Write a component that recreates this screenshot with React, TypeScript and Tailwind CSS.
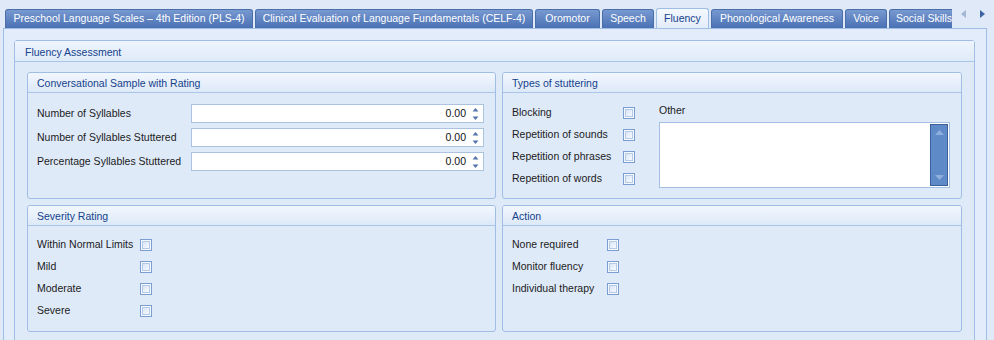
import React from "react";

const tabs = [
  { label: "Preschool Language Scales – 4th Edition (PLS-4)", w: "w-[248px]" },
  { label: "Clinical Evaluation of Language Fundamentals (CELF-4)", w: "w-[278px]" },
  { label: "Oromotor", w: "w-[65px]" },
  { label: "Speech", w: "w-[52px]" },
  { label: "Fluency", w: "w-[53px]", active: true },
  { label: "Phonological Awareness", w: "w-[132px]" },
  { label: "Voice", w: "w-[42px]" },
  { label: "Social Skills", w: "w-[70px]" },
];

function Checkbox() {
  return (
    <span className="block w-[12px] h-[12px] border border-[#7b9ed2] bg-[#f5f8fd] p-[1px]">
      <span className="block w-full h-full border border-[#b5cae8] bg-gradient-to-br from-[#d9e5f5] to-[#f7fafe]" />
    </span>
  );
}

function Spin() {
  return (
    <svg width="7" height="14" viewBox="0 0 7 14" className="mr-[4px]">
      <path d="M3.5 1 L6.5 4.5 L0.5 4.5 Z" fill="#5476ad" />
      <path d="M3.5 13 L6.5 9.5 L0.5 9.5 Z" fill="#5476ad" />
    </svg>
  );
}

function Section({ title, children }: { title: string; children: React.ReactNode }) {
  return (
    <div className="h-[127px] border border-[#9fbde5] rounded-[3px] bg-[#dfeaf9] overflow-hidden">
      <div className="h-[20px] border-b border-[#a9c5e9] bg-gradient-to-b from-[#f2f7fe] to-[#dde9f8] pl-[9px] leading-[21px] text-[#15428b]">
        {title}
      </div>
      {children}
    </div>
  );
}

function CheckRow({ label, w }: { label: string; w: string }) {
  return (
    <div className="flex items-center h-[22px]">
      <span className={`${w} shrink-0 whitespace-nowrap`}>{label}</span>
      <Checkbox />
    </div>
  );
}

function NumberRow({ label }: { label: string }) {
  return (
    <div className="flex items-center h-[19px]">
      <span className="w-[154px] shrink-0 whitespace-nowrap">{label}</span>
      <div className="flex-1 h-[19px] bg-white border border-[#abc2e0] flex items-center justify-end">
        <span className="mr-[6px] text-[#111]">0.00</span>
        <Spin />
      </div>
    </div>
  );
}

export default function App() {
  return (
    <div className="w-[994px] h-[340px] overflow-hidden bg-[#dfe9f8] text-[10.5px] text-[#1b1b1b] font-['Liberation_Sans',Arial,sans-serif]">
      <div className="h-[28px] flex items-end pl-[5px]">
        <div className="w-[947px] flex items-end gap-[2px] overflow-hidden shrink-0">
          {tabs.map((t) =>
            t.active ? (
              <div
                key={t.label}
                className={`${t.w} shrink-0 h-[21px] -mb-px relative z-10 rounded-t-[3px] border border-b-0 border-[#9fbde5] bg-gradient-to-b from-[#f4f8fe] to-[#e2ecfa] text-[#15428b] flex items-center justify-center whitespace-nowrap`}
              >
                {t.label}
              </div>
            ) : (
              <div
                key={t.label}
                className={`${t.w} shrink-0 h-[19px] rounded-t-[3px] border border-b-0 border-[#4a6ea8] bg-gradient-to-b from-[#7899d1] to-[#4a71b3] text-white flex items-center justify-center whitespace-nowrap`}
              >
                {t.label}
              </div>
            )
          )}
        </div>
        <div className="h-[28px] flex items-center gap-[14px] pl-[9px]">
          <svg width="5" height="8" viewBox="0 0 5 8">
            <path d="M5 0 L5 8 L0 4 Z" fill="#a2b6d5" />
          </svg>
          <svg width="5" height="8" viewBox="0 0 5 8">
            <path d="M0 0 L0 8 L5 4 Z" fill="#3d65a6" />
          </svg>
        </div>
      </div>
      <div className="ml-[3px] mr-[7px] h-[312px] border border-b-0 border-[#9fbde5] bg-[#e2ecfa] pt-[11px] pl-[10px] pr-[11px]">
        <div className="h-[320px] border border-[#9fbde5] rounded-[3px] bg-[#dfeaf9]">
          <div className="h-[21px] border-b border-[#a9c5e9] bg-gradient-to-b from-[#eef4fd] to-[#dfeaf9] pl-[10px] leading-[22px] text-[#15428b]">
            Fluency Assessment
          </div>
          <div className="grid grid-cols-[469px_1fr] gap-[6px] pt-[10px] px-[12px]">
            <Section title="Conversational Sample with Rating">
              <div className="pt-[11px] pl-[9px] pr-[11px] flex flex-col gap-[5px]">
                <NumberRow label="Number of Syllables" />
                <NumberRow label="Number of Syllables Stuttered" />
                <NumberRow label="Percentage Syllables Stuttered" />
              </div>
            </Section>
            <Section title="Types of stuttering">
              <div className="pt-[9px] pl-[9px] pr-[11px] flex">
                <div className="flex flex-col">
                  <CheckRow label="Blocking" w="w-[111px]" />
                  <CheckRow label="Repetition of sounds" w="w-[111px]" />
                  <CheckRow label="Repetition of phrases" w="w-[111px]" />
                  <CheckRow label="Repetition of words" w="w-[111px]" />
                </div>
                <div className="flex-1 ml-[24px] flex flex-col">
                  <div className="h-[16px] leading-[16px]">Other</div>
                  <div className="mt-[4px] h-[66px] bg-white border border-[#a3bfe4] flex justify-end p-[1px]">
                    <div className="w-[18px] h-full bg-[#5e8ac7] border border-[#3a5f99] flex flex-col items-center justify-between py-[5px]">
                      <svg width="9" height="5" viewBox="0 0 9 5">
                        <path d="M4.5 0 L9 5 L0 5 Z" fill="#8eb0de" />
                      </svg>
                      <svg width="9" height="5" viewBox="0 0 9 5">
                        <path d="M4.5 5 L9 0 L0 0 Z" fill="#8eb0de" />
                      </svg>
                    </div>
                  </div>
                </div>
              </div>
            </Section>
            <Section title="Severity Rating">
              <div className="pt-[8px] pl-[9px] flex flex-col">
                <CheckRow label="Within Normal Limits" w="w-[103px]" />
                <CheckRow label="Mild" w="w-[103px]" />
                <CheckRow label="Moderate" w="w-[103px]" />
                <CheckRow label="Severe" w="w-[103px]" />
              </div>
            </Section>
            <Section title="Action">
              <div className="pt-[8px] pl-[9px] flex flex-col">
                <CheckRow label="None required" w="w-[95px]" />
                <CheckRow label="Monitor fluency" w="w-[95px]" />
                <CheckRow label="Individual therapy" w="w-[95px]" />
              </div>
            </Section>
          </div>
        </div>
      </div>
    </div>
  );
}
